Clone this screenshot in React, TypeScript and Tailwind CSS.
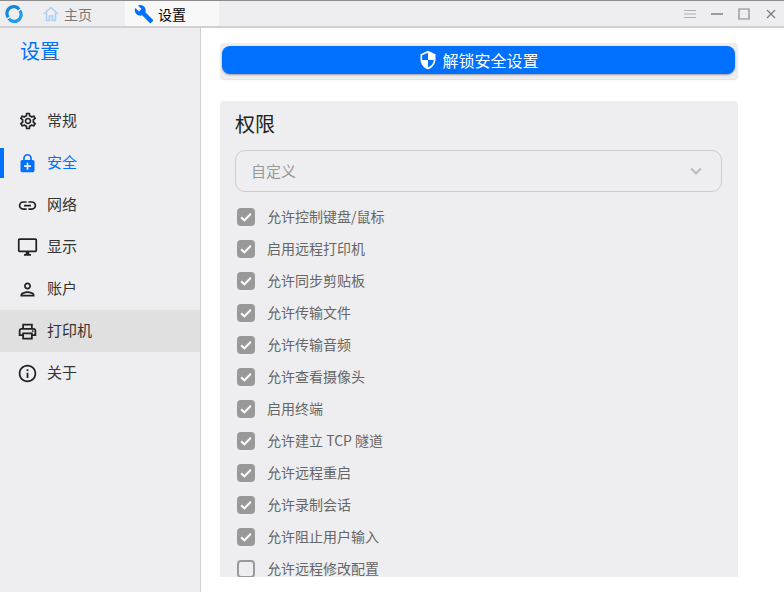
import type { ReactNode } from "react";
import {
  MdBuild,
  MdEnhancedEncryption,
  MdExpandMore,
  MdInfoOutline,
  MdLink,
  MdOutlineDesktopWindows,
  MdOutlinePerson,
  MdOutlinePrint,
  MdOutlineSettings,
  MdSecurity,
} from "react-icons/md";

const font = "font-['Noto_Sans_CJK_SC','Noto_Sans',sans-serif]";

const navItems: { label: string; icon: ReactNode; active?: boolean; hover?: boolean }[] = [
  { label: "常规", icon: <MdOutlineSettings size={20} /> },
  { label: "安全", icon: <MdEnhancedEncryption size={21} />, active: true },
  { label: "网络", icon: <MdLink size={21} /> },
  { label: "显示", icon: <MdOutlineDesktopWindows size={22} /> },
  { label: "账户", icon: <MdOutlinePerson size={21} /> },
  { label: "打印机", icon: <MdOutlinePrint size={21} />, hover: true },
  { label: "关于", icon: <MdInfoOutline size={21} /> },
];

const permissions = [
  { label: "允许控制键盘/鼠标", checked: true },
  { label: "启用远程打印机", checked: true },
  { label: "允许同步剪贴板", checked: true },
  { label: "允许传输文件", checked: true },
  { label: "允许传输音频", checked: true },
  { label: "允许查看摄像头", checked: true },
  { label: "启用终端", checked: true },
  { label: "允许建立 TCP 隧道", checked: true },
  { label: "允许远程重启", checked: true },
  { label: "允许录制会话", checked: true },
  { label: "允许阻止用户输入", checked: true },
  { label: "允许远程修改配置", checked: false },
];

const Logo = () => (
  <svg width="18" height="18" viewBox="0 0 18 18" fill="none" strokeLinecap="butt">
    <path d="M14.2 4.4A6.5 6.5 0 0 0 3.2 12.4" stroke="#1287dc" strokeWidth="3.2" />
    <path d="M3.8 13.6A6.5 6.5 0 0 0 14.8 5.6" stroke="#1a9cf0" strokeWidth="3.2" />
  </svg>
);

const HomeIcon = () => (
  <svg width="16" height="16" viewBox="0 0 16 16" fill="none" stroke="#a9d0f5" strokeWidth="1.6" className="mr-[5px]">
    <path d="M1 8l7-6.5L15 8" />
    <path d="M3.5 7v7.5h3V10h3v4.5h3V7" />
  </svg>
);

const Checkbox = ({ checked }: { checked: boolean }) =>
  checked ? (
    <span className="flex h-[18px] w-[18px] items-center justify-center rounded-[4px] bg-[#999999]">
      <svg width="14" height="14" viewBox="0 0 14 14" fill="none">
        <path d="M2.2 7.2l3.2 3.2 6.4-6.6" stroke="#ffffff" strokeWidth="2" />
      </svg>
    </span>
  ) : (
    <span className="h-[18px] w-[18px] rounded-[4px] border-2 border-[#999999]" />
  );

export default function App() {
  return (
    <div className={`flex h-[592px] w-[784px] flex-col overflow-hidden bg-white ${font}`}>
      {/* Title bar */}
      <div className="flex h-[28px] shrink-0 items-center border-t border-b-2 border-t-[#8c8c8c] border-b-[#d0d0d0] bg-[#eeeef0]">
        <div className="flex w-[28px] items-center justify-center pl-[0px]">
          <Logo />
        </div>
        <div className="flex h-full w-[97px] items-center pl-[15px] text-sm text-[#777777]">
          <HomeIcon />
          主页
        </div>
        <div className="flex h-full w-[94px] items-center bg-[#f8f8f8] pl-[9px] text-sm text-black">
          <MdBuild size={20} className="mr-[4px] text-[#0071ff]" />
          设置
        </div>
        <div className="ml-auto flex items-center">
          <span className="flex w-[27px] justify-center">
            <svg width="12" height="12" viewBox="0 0 12 12" fill="none" stroke="#b0b0b0" strokeWidth="1">
              <path d="M0 2.5h12M0 6h12M0 9.5h12" />
            </svg>
          </span>
          <span className="flex w-[27px] justify-center">
            <svg width="12" height="12" viewBox="0 0 12 12" fill="none" stroke="#666666" strokeWidth="1.2">
              <path d="M0 6h12" />
            </svg>
          </span>
          <span className="flex w-[27px] justify-center">
            <svg width="12" height="12" viewBox="0 0 12 12" fill="none" stroke="#888888" strokeWidth="1.2">
              <path d="M1 1h10v10H1z" />
            </svg>
          </span>
          <span className="flex w-[27px] justify-center">
            <svg width="12" height="12" viewBox="0 0 12 12" fill="none" stroke="#777777" strokeWidth="1.1">
              <path d="M2 2l8 8M10 2l-8 8" />
            </svg>
          </span>
        </div>
      </div>

      <div className="flex min-h-0 flex-1">
        {/* Sidebar */}
        <aside className="w-[201px] shrink-0 border-r border-[#d0d0d0] bg-[#eeeef0]">
          <h1 className="h-[72px] pl-[20px] pt-[8px] text-xl leading-[30px] font-normal text-[#0071ff]">设置</h1>
          <nav className="flex flex-col">
            {navItems.map((item) => (
              <div
                key={item.label}
                className={`flex h-[42px] items-center pl-[17px] ${item.hover ? "bg-[#e0e0e0]" : ""} ${
                  item.active ? "relative text-[#0071ff]" : "text-[#222222]"
                }`}
              >
                {item.active && <span className="absolute left-0 top-[6px] h-[30px] w-[4px] bg-[#0071ff]" />}
                <span className="flex w-[21px] justify-center">{item.icon}</span>
                <span className={`mb-[1px] ml-[9px] text-[15px] ${item.active ? "" : "text-[#333333]"}`}>{item.label}</span>
              </div>
            ))}
          </nav>
        </aside>

        {/* Content */}
        <main className="flex min-w-0 flex-1 flex-col pb-[15px] pl-[19px] pr-[46px] pt-[15px]">
          <div className="h-[36px] shrink-0 rounded-[4px] bg-[#eeeef0] pl-[2px] pr-[3px] pt-[3px] shadow-[0_1px_1px_rgba(0,0,0,0.12)]">
            <button className="flex h-[28px] w-full items-center justify-center rounded-[8px] bg-[#0071ff] text-base text-white shadow-[0_1px_2px_rgba(0,0,0,0.35)]">
              <MdSecurity size={20} className="mr-[4px]" />
              <span className="mb-[1px]">解锁安全设置</span>
            </button>
          </div>

          <section className="mt-[22px] min-h-0 flex-1 overflow-hidden rounded-t-[4px] bg-[#eeeef0] pl-[15px] pr-[16px]">
            <h2 className="pt-[8px] text-xl leading-[30px] font-normal text-[#222222]">权限</h2>
            <div className="mt-[11px] flex h-[42px] items-center justify-between rounded-[10px] border border-[#cccccc] pl-[15px] pr-[14px] text-[15px] text-[#999999]">
              自定义
              <MdExpandMore size={22} className="text-[#bbbbbb]" />
            </div>
            <div className="mt-[9px] flex flex-col">
              {permissions.map((p) => (
                <div key={p.label} className="flex h-[32px] shrink-0 items-center pl-[2px] text-sm text-[#666666]">
                  <Checkbox checked={p.checked} />
                  <span className="mb-[2px] ml-[12px]">{p.label}</span>
                </div>
              ))}
            </div>
          </section>
        </main>
      </div>
    </div>
  );
}
